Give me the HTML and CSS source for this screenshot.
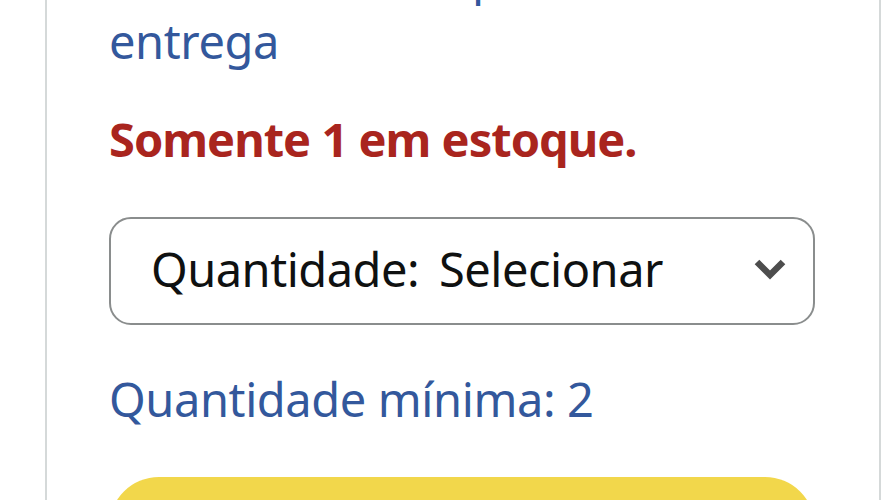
FILE: index.html
```html
<!DOCTYPE html>
<html lang="pt-BR">
<head>
    <meta charset="UTF-8">
    <meta name="viewport" content="width=device-width, initial-scale=1.0">
    <title>Comprar</title>
    <link rel="stylesheet" href="styles.css">
</head>
<body>
    <div class="buy-box">
        <a class="delivery-link" href="#">Detalhes da compra e<br>entrega</a>

        <p class="stock">Somente 1 em estoque.</p>

        <div class="qty-select">
            <span class="qty-label">Quantidade:</span>
            <span class="qty-value">Selecionar</span>
            <svg class="chevron" width="34" height="24" viewBox="0 0 34 24">
                <polyline points="4,5 17,18 30,5" fill="none" stroke="#4d4d4d" stroke-width="6.5"/>
            </svg>
        </div>

        <a class="min-qty" href="#">Quantidade mínima: 2</a>

        <button class="add-cart" type="button"></button>
    </div>
</body>
</html>
```

FILE: styles.css
```css
body {
    margin: 0;
    font-family: "Noto Sans", "Open Sans", sans-serif;
    background-color: #fff;
    color: #0f1111;
    overflow: hidden;
}

.buy-box {
    margin: -55px 0 0 45px;
    width: 706px;
    padding: 0 64px 0 62px;
    border-left: 2px solid #d5d9d9;
    border-right: 2px solid #d5d9d9;
    font-size: 47px;
    line-height: 64px;
}

.delivery-link {
    display: block;
    color: #33589c;
    text-decoration: none;
    letter-spacing: -0.4px;
}

.stock {
    margin: 34px 0 0 0;
    color: #a9251e;
    font-weight: bold;
    letter-spacing: -1px;
}

.qty-select {
    margin-top: 46px;
    display: flex;
    align-items: center;
    padding: 18px 26px 22px 40px;
    border: 2px solid #8a8d8d;
    border-radius: 22px;
    letter-spacing: -0.5px;
}

.qty-label {
    margin-right: 20px;
}

.chevron {
    margin-left: auto;
}

.min-qty {
    display: block;
    margin-top: 42px;
    color: #33589c;
    text-decoration: none;
    letter-spacing: -0.4px;
}

.add-cart {
    display: block;
    margin-top: 46px;
    width: 100%;
    height: 100px;
    border: none;
    border-radius: 50px;
    background-color: #f2d74b;
}
```
